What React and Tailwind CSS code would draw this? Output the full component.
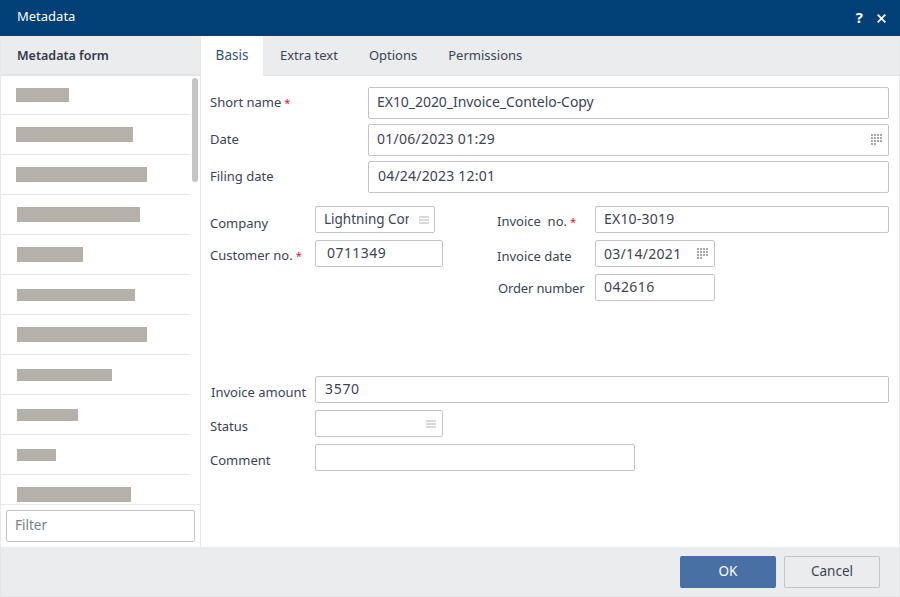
import React from "react";

const bars = [
  [16, 53, 14], [16, 117, 15], [16, 131, 15], [17, 123, 15], [17, 66, 15], [17, 118, 12],
  [17, 130, 15], [17, 95, 12], [17, 61, 12], [17, 39, 12], [17, 114, 15],
];

function Burger({ className = "" }) {
  return (
    <svg width="10" height="8" viewBox="0 0 10 8" className={`shrink-0 ${className}`}>
      <path d="M0 1h10M0 4h10M0 7h10" stroke="#b4b4b4" strokeWidth="1" />
    </svg>
  );
}

function Cal() {
  const cells = [];
  for (let y = 0; y < 4; y++)
    for (let x = 0; x < 4; x++) {
      if (y === 3 && x > 1) continue;
      cells.push(<rect key={`${x}-${y}`} x={x * 3} y={y * 3} width="2" height="2" fill="#a8a8a8" />);
    }
  return (
    <svg width="12" height="12" viewBox="0 0 12 12" className="shrink-0">
      {cells}
    </svg>
  );
}

function Field({ w, h = "h-[27px]", pl = "pl-[9px]", pb = "pb-px", value, icon, iconClass = "pr-[5px]", text = "" }) {
  return (
    <div className={`${w} ${h} ${pl} ${iconClass} flex items-center justify-between border border-[#c4c4c4] rounded-[2px] bg-white text-[#3c4454] min-w-0`}>
      <span className={`overflow-hidden whitespace-nowrap flex-1 ${pb} ${text}`}>{value}</span>
      {icon}
    </div>
  );
}

function Label({ text, req, w = "w-[105px]", cls = "" }) {
  return (
    <div className={`${w} shrink-0 whitespace-pre text-[13px] text-[#3c4454] ${cls}`}>
      {text}
      {req && <span className="text-[#e8112d] ml-[3px] text-[11px] leading-none">*</span>}
    </div>
  );
}

export default function App() {
  return (
    <div className="w-[900px] h-[597px] flex flex-col bg-white text-[14px] leading-[20px] overflow-hidden font-['Noto_Sans','Liberation_Sans',sans-serif]">
      <header className="h-[36px] shrink-0 bg-[#004077] text-white flex items-center justify-between pl-[17px] pr-[14px]">
        <span className="text-[13px] pb-[4px]">Metadata</span>
        <div className="flex items-center gap-[14px]">
          <span className="font-bold text-[15px] pb-[3px]">?</span>
          <svg width="9" height="9" viewBox="0 0 9 9">
            <path d="M0.7 0.7l7.6 7.6M8.3 0.7l-7.6 7.6" stroke="#fff" strokeWidth="1.8" />
          </svg>
        </div>
      </header>

      <div className="flex-1 min-h-0 flex border-x border-[#e8e9eb]">
        <aside className="w-[200px] shrink-0 flex flex-col border-r border-[#e8e9eb]">
          <div className="h-[40px] shrink-0 bg-[#ebecee] border-b-2 border-[#e4e5e7] flex items-center pl-[16px] pt-px font-semibold text-[12.5px] text-[#333b48]">
            Metadata form
          </div>
          <div className="relative flex-1 min-h-0 overflow-hidden border-b border-[#e8e9eb]">
            <div className="flex flex-col -mt-px">
              {bars.map(([x, w, h], i) => (
                <div
                  key={i}
                  className="h-[40px] shrink-0 mr-[11px] border-b border-[#e4e5e7] flex items-center"
                >
                  <div className="bg-[#b5b0a9]" style={{ width: w, height: h, marginLeft: x - 1 }} />
                </div>
              ))}
            </div>
            <div className="absolute right-[2px] top-[2px] w-[6px] h-[104px] rounded-[3px] bg-[#c4c4c4]" />
          </div>
          <div className="h-[42px] shrink-0 pt-[5px] pl-[5px] pr-[5px]">
            <div className="h-[32px] border border-[#c4c4c4] rounded-[2px] pl-[8px] pb-[3px] flex items-center text-[13.5px] text-[#7a7f88]">
              Filter
            </div>
          </div>
        </aside>

        <main className="flex-1 min-w-0 flex flex-col">
          <nav className="h-[40px] shrink-0 bg-[#ebecee] border-b border-[#e4e5e7] flex items-stretch text-[#3c4454] text-[13px]">
            <div className="w-[62px] -mb-px bg-white flex items-center justify-center text-[#33527f] text-[13.5px] pb-[2px]">Basis</div>
            <div className="ml-[17px] flex items-center pb-[2px]">Extra text</div>
            <div className="ml-[31px] flex items-center pb-[2px]">Options</div>
            <div className="ml-[31px] flex items-center pb-[2px]">Permissions</div>
          </nav>

          <div className="flex-1 pt-[11px] pl-[9px] pr-[10px]">
            <div className="flex flex-col gap-[5px]">
              {[
                ["Short name", true, "EX10_2020_Invoice_Contelo-Copy", false, "tracking-[-0.05px]"],
                ["Date", false, "01/06/2023 01:29", true, "tracking-[0.25px]"],
                ["Filing date", false, "04/24/2023 12:01", false, "pl-[1px] tracking-[0.2px]"],
              ].map(([l, r, v, c, t]) => (
                <div key={l} className="flex items-center">
                  <Label text={l} req={r} w="w-[158px]" cls="pb-[2px]" />
                  <Field w="flex-1" h="h-[32px]" pl="pl-[8px]" pb="pb-[3px]" text={t} value={v} icon={c ? <Cal /> : null} />
                </div>
              ))}
            </div>

            <div className="flex mt-[13px]">
              <div className="w-[287px] shrink-0 flex flex-col gap-[7px]">
                <div className="flex items-center">
                  <Label text="Company" cls="pt-[6px]" />
                  <Field w="w-[120px]" pl="pl-[8px]" text="text-[13.5px]" value="Lightning Contelo" icon={<Burger className="ml-[10px]" />} />
                </div>
                <div className="flex items-center">
                  <Label text="Customer no." req cls="pt-[3px]" />
                  <Field w="w-[128px]" pl="pl-[11px]" text="tracking-[0.45px]" value="0711349" />
                </div>
              </div>
              <div className="flex-1 min-w-0 flex flex-col gap-[7px]">
                <div className="flex items-center">
                  <Label text="Invoice  no." req w="w-[98px]" cls="pt-[3px]" />
                  <Field w="flex-1" pl="pl-[8px]" text="tracking-[0.2px]" value="EX10-3019" />
                </div>
                <div className="flex items-center">
                  <Label text="Invoice date" w="w-[98px]" cls="pt-[5px]" />
                  <Field w="w-[120px]" pl="pl-[8px]" pb="pb-0" text="tracking-[0.3px]" value="03/14/2021" icon={<Cal />} />
                </div>
                <div className="flex items-center">
                  <Label text="Order number" w="w-[97px] ml-px" cls="pt-px tracking-[-0.15px]" />
                  <Field w="w-[120px]" pl="pl-[8px]" text="tracking-[0.45px]" value="042616" />
                </div>
              </div>
            </div>

            <div className="flex flex-col gap-[7px] mt-[75px]">
              <div className="flex items-center">
                <Label text="Invoice amount" w="w-[104px] ml-px" cls="pt-[5px]" />
                <Field w="flex-1" text="tracking-[0.7px]" value="3570" />
              </div>
              <div className="flex items-center">
                <Label text="Status" cls="pt-[5px]" />
                <Field w="w-[128px]" iconClass="pr-[6px]" value="" icon={<Burger />} />
              </div>
              <div className="flex items-center">
                <Label text="Comment" cls="pt-[5px]" />
                <Field w="w-[320px]" value="" />
              </div>
            </div>
          </div>
        </main>
      </div>

      <footer className="h-[50px] shrink-0 bg-[#ebecee] border-x border-b border-[#e4e5e7] flex items-start justify-end gap-[8px] pt-[9px] pr-[19px] text-[13.5px]">
        <button className="w-[96px] h-[32px] rounded-[2px] bg-[#4870a4] text-white pb-[3px]">OK</button>
        <button className="w-[96px] h-[32px] rounded-[2px] border border-[#c4c4c4] text-[#3c4454] pb-[3px]">Cancel</button>
      </footer>
    </div>
  );
}
